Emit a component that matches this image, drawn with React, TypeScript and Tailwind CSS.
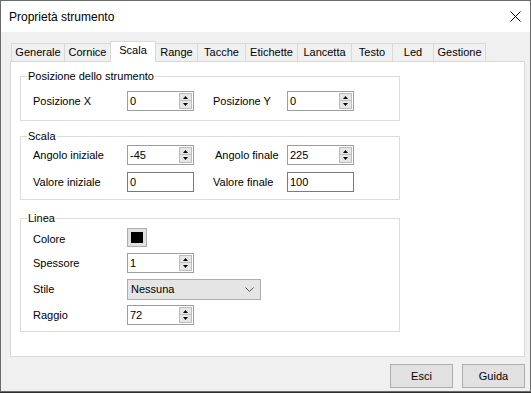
import React from "react";

const tabs: { name: string; w: number }[] = [
  { name: "Generale", w: 54 },
  { name: "Cornice", w: 47 },
  { name: "Scala", w: 46 },
  { name: "Range", w: 43 },
  { name: "Tacche", w: 49 },
  { name: "Etichette", w: 53 },
  { name: "Lancetta", w: 55 },
  { name: "Testo", w: 42 },
  { name: "Led", w: 42 },
  { name: "Gestione", w: 53 },
];

function Arrow({ up }: { up: boolean }) {
  return (
    <svg width="5" height="3" viewBox="0 0 5 3" className="block">
      <path d={up ? "M0 3H5L2.5 0Z" : "M0 0H5L2.5 3Z"} fill="#000" />
    </svg>
  );
}

function Spin({ value }: { value: string }) {
  return (
    <div className="flex h-[20px] w-[67px] border border-[#9d9d9d] bg-white">
      <div className="flex-1 pl-[2px] leading-[18px]">{value}</div>
      <div className="flex w-[14px] flex-col py-[1px] pr-[1px]">
        <div className="flex h-[8px] items-center justify-center border border-[#bdbdbd] bg-[#e6e6e6]">
          <Arrow up />
        </div>
        <div className="flex h-[8px] items-center justify-center border border-t-0 border-[#bdbdbd] bg-[#e6e6e6]">
          <Arrow up={false} />
        </div>
      </div>
    </div>
  );
}

function TextBox({ value }: { value: string }) {
  return (
    <div className="h-[20px] w-[67px] border border-[#7a7a7a] bg-white pl-[2px] leading-[18px]">
      {value}
    </div>
  );
}

function Group({
  title,
  children,
  className,
}: {
  title: string;
  children: React.ReactNode;
  className: string;
}) {
  return (
    <fieldset className={`w-[380px] border border-[#dcdcdc] p-0 ${className}`}>
      <legend className="ml-[6px] px-[1px] text-[11px] leading-[13px]">{title}</legend>
      {children}
    </fieldset>
  );
}

export default function App() {
  return (
    <div className="h-[393px] w-[531px] bg-[#2e2e2e] font-['Liberation_Sans',Arial,sans-serif] text-[11px] text-black">
      <div className="flex h-[392px] w-[531px] flex-col border border-[#6a6a6a] bg-[#f0f0f0]">
        {/* Title bar */}
        <div className="flex h-[31px] items-center justify-between bg-white pl-[8px] pr-[9px]">
          <span className="text-[12px]">Proprietà strumento</span>
          <svg width="11" height="11" viewBox="0 0 11 11">
            <path d="M0.5 0.5L10.5 10.5M10.5 0.5L0.5 10.5" stroke="#000" strokeWidth="1" />
          </svg>
        </div>

        {/* Body */}
        <div className="flex flex-1 flex-col pl-[9px] pt-[9px]">
          {/* Tabs */}
          <div className="flex h-[20px] items-end pl-[1px]">
            {tabs.map((t, i) => {
              const sel = t.name === "Scala";
              return (
                <div
                  key={t.name}
                  style={{ width: t.w }}
                  className={
                    sel
                      ? "relative z-10 -mb-[1px] -ml-[1px] flex h-[21px] items-center justify-center border border-b-0 border-[#d9d9d9] bg-white pb-[3px]"
                      : `flex h-[18px] items-center justify-center border border-b-0 border-[#d9d9d9] bg-[#f0f0f0] ${i === 0 ? "" : "-ml-[1px]"}`
                  }
                >
                  {t.name}
                </div>
              );
            })}
          </div>

          {/* Panel */}
          <div className="flex h-[296px] w-[515px] flex-col border border-[#d9d9d9] bg-white pl-[9px] pt-[8px]">
            <Group title="Posizione dello strumento" className="">
              <div className="flex h-[37px] items-start pl-[12px] pt-[8px]">
                <div className="flex h-[20px] w-[94px] items-center">Posizione X</div>
                <Spin value="0" />
                <div className="ml-[19px] flex h-[20px] w-[74px] items-center">Posizione Y</div>
                <Spin value="0" />
              </div>
            </Group>

            <Group title="Scala" className="mt-[9px]">
              <div className="flex flex-col gap-[7px] pb-[7px] pl-[12px] pt-[2px]">
                <div className="flex h-[20px] items-center">
                  <div className="w-[94px]">Angolo iniziale</div>
                  <Spin value="-45" />
                  <div className="ml-[19px] w-[74px] pl-[2px]">Angolo finale</div>
                  <Spin value="225" />
                </div>
                <div className="flex h-[20px] items-center">
                  <div className="w-[94px]">Valore iniziale</div>
                  <TextBox value="0" />
                  <div className="ml-[19px] w-[74px]">Valore finale</div>
                  <TextBox value="100" />
                </div>
              </div>
            </Group>

            <Group title="Linea" className="mt-[12px]">
              <div className="flex flex-col gap-[6px] pb-[6px] pl-[12px] pt-[2px]">
                <div className="flex h-[20px] items-center">
                  <div className="mt-[5px] w-[94px]">Colore</div>
                  <div className="flex h-[19px] w-[20px] items-center justify-center border border-[#adadad] bg-[#e1e1e1]">
                    <div className="h-[11px] w-[12px] bg-black" />
                  </div>
                </div>
                <div className="flex h-[20px] items-center">
                  <div className="w-[94px]">Spessore</div>
                  <Spin value="1" />
                </div>
                <div className="flex h-[20px] items-center">
                  <div className="w-[94px]">Stile</div>
                  <div className="flex h-[21px] w-[134px] items-center justify-between border border-[#adadad] bg-[#e5e5e5] pl-[3px] pr-[6px]">
                    <span>Nessuna</span>
                    <svg width="9" height="5" viewBox="0 0 9 5">
                      <path d="M0.5 0.5L4.5 4.5L8.5 0.5" fill="none" stroke="#555" strokeWidth="1" />
                    </svg>
                  </div>
                </div>
                <div className="flex h-[20px] items-center">
                  <div className="w-[94px]">Raggio</div>
                  <Spin value="72" />
                </div>
              </div>
            </Group>
          </div>

          {/* Buttons */}
          <div className="mt-[7px] flex justify-end gap-[9px] pr-[5px]">
            <div className="flex h-[24px] w-[63px] items-center justify-center border border-[#adadad] bg-[#e1e1e1]">
              Esci
            </div>
            <div className="flex h-[24px] w-[63px] items-center justify-center border border-[#adadad] bg-[#e1e1e1]">
              Guida
            </div>
          </div>
        </div>
      </div>
    </div>
  );
}
